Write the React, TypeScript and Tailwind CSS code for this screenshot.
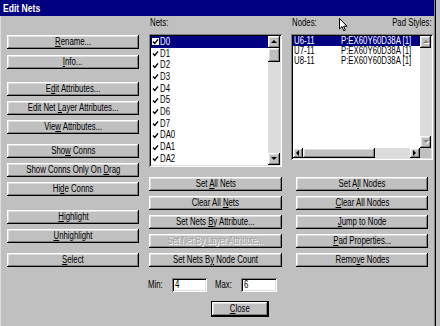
import type { ReactNode } from 'react';

const RAISED = 'shadow-[inset_-1px_-1px_0_#000,inset_1px_1px_0_#fff,inset_-2px_-2px_0_#808080,inset_2px_2px_0_#dfdfdf]';
const SUNKEN = 'shadow-[inset_1px_1px_0_#808080,inset_-1px_-1px_0_#fff,inset_2px_2px_0_#000,inset_-2px_-2px_0_#dfdfdf]';

const NETS = ['D0', 'D1', 'D2', 'D3', 'D4', 'D5', 'D6', 'D7', 'DA0', 'DA1', 'DA2'];
const NODES = ['U6-11', 'U7-11', 'U8-11'];

// the old dialog font is much narrower than Arial, so squeeze the glyphs
const ORIGIN = { l: 'origin-left', c: 'origin-center', r: 'origin-right' };
function T({ children, o = 'c' }: { children: ReactNode; o?: 'l' | 'c' | 'r' }) {
  return <span className={`inline-block whitespace-nowrap scale-x-[0.78] ${ORIGIN[o]}`}>{children}</span>;
}

function Btn({ children, className = '', disabled = false }: { children: ReactNode; className?: string; disabled?: boolean }) {
  return (
    <button
      type="button"
      className={`h-[14px] flex items-center justify-center bg-[#c0c0c0] text-[10px] leading-none ${RAISED} ${
        disabled ? 'text-[#a0a0a0] [text-shadow:1px_1px_0_#fff]' : 'text-black'
      } ${className}`}
    >
      <T>{children}</T>
    </button>
  );
}

function Arrow({ dir, off = false }: { dir: 'up' | 'down' | 'left' | 'right'; off?: boolean }) {
  const pts = { up: '1,5 4,2 7,5', down: '1,2 4,5 7,2', left: '5,1 2,4 5,7', right: '2,1 5,4 2,7' }[dir];
  return (
    <div className={`flex items-center justify-center bg-[#c0c0c0] ${RAISED} ${dir === 'up' || dir === 'down' ? 'h-[12px] w-full' : 'w-[10px] h-full'}`}>
      <svg width="8" height="8" viewBox="0 0 8 8">
        {off && <polygon points={pts} fill="#fff" transform="translate(1,1)" />}
        <polygon points={pts} fill={off ? '#808080' : '#000'} />
      </svg>
    </div>
  );
}

function Check() {
  return (
    <svg width="7" height="7" viewBox="0 0 7 7" className="shrink-0">
      <rect width="7" height="7" fill="#fff" />
      <path d="M1 3.5 L2.8 5.4 L6 1.4" stroke="#000" strokeWidth="1.4" fill="none" />
    </svg>
  );
}

function Cursor() {
  return (
    <svg width="9" height="14" viewBox="0 0 9 14" className="absolute left-[48px] top-[2px]">
      <path d="M0.5 0.5 L0.5 11 L3 8.6 L4.8 12.8 L6.3 12.1 L4.6 8.2 L8 8.2 Z" fill="#fff" stroke="#000" strokeWidth="1" strokeLinejoin="round" />
    </svg>
  );
}

export default function App() {
  return (
    <div className="w-[440px] h-[326px] bg-[#c0c0c0] overflow-hidden font-['Liberation_Sans',Arial,sans-serif] text-black">
      <div className="w-[436px] h-[326px] shadow-[inset_-1px_0_0_#000,inset_-2px_0_0_#808080,inset_1px_0_0_#dfdfdf]">
        <div className="w-[434px] h-[16px] bg-[#000080] text-white font-bold text-[11px] leading-[16px] pl-[3px]">
          <T o="l">Edit Nets</T>
        </div>

        <div className="flex">
          {/* left column */}
          <div className="ml-[7px] w-[132px] pt-[19px] flex flex-col">
            <Btn><u>R</u>ename...</Btn>
            <Btn className="mt-[6px]"><u>I</u>nfo...</Btn>
            <Btn className="mt-[13px]">E<u>d</u>it Attributes...</Btn>
            <Btn className="mt-[5px]">Edit Net <u>L</u>ayer Attributes...</Btn>
            <Btn className="mt-[5px]">Vie<u>w</u> Attributes...</Btn>
            <Btn className="mt-[10px]">Sho<u>w</u> Conns</Btn>
            <Btn className="mt-[5px]">Show Conns Only On <u>D</u>rag</Btn>
            <Btn className="mt-[5px]">Hi<u>d</u>e Conns</Btn>
            <Btn className="mt-[14px]"><u>H</u>ighlight</Btn>
            <Btn className="mt-[5px]"><u>U</u>nhighlight</Btn>
            <Btn className="mt-[10px]"><u>S</u>elect</Btn>
          </div>

          {/* middle column */}
          <div className="ml-[10px] w-[133px] flex flex-col">
            <div className="h-[18px] pt-[1px] pl-[1px] text-[10px] leading-[11px]"><T o="l">Nets:</T></div>
            <div className={`h-[133px] bg-white p-[2px] flex ${SUNKEN}`}>
              <div className="flex-1 min-w-0 text-[10px]">
                {NETS.map((n, i) => (
                  <div key={n} className={`h-[11.7px] flex items-center pl-[1px] ${i === 0 ? 'bg-[#000080] text-white' : ''}`}>
                    <Check />
                    <span className="ml-[1px] leading-none"><T o="l">{n}</T></span>
                  </div>
                ))}
              </div>
              <div className="w-[12px] flex flex-col">
                <Arrow dir="up" />
                <div className={`h-[14px] bg-[#c0c0c0] ${RAISED}`} />
                <div className="flex-1 bg-[#dcdcdc]" />
                <Arrow dir="down" />
              </div>
            </div>
            <div className="mt-[10px] flex flex-col gap-[5px]">
              <Btn>Set <u>A</u>ll Nets</Btn>
              <Btn>Clear All <u>N</u>ets</Btn>
              <Btn>Set Nets <u>B</u>y Attribute...</Btn>
              <Btn disabled>Set Net By Layer Attribute...</Btn>
              <Btn>Set Nets B<u>y</u> Node Count</Btn>
            </div>
            <div className="mt-[10px] flex items-center text-[10px] -ml-[1px]">
              <span className="w-[24px]"><T o="l">Min:</T></span>
              <div className={`w-[35px] h-[14px] bg-white pl-[3px] leading-[14px] ${SUNKEN}`}><T o="l">4</T></div>
              <span className="w-[26px] ml-[8px]"><T o="l">Max:</T></span>
              <div className={`w-[36px] h-[14px] bg-white pl-[3px] leading-[14px] ${SUNKEN}`}><T o="l">6</T></div>
            </div>
            <div className="mt-[9px] ml-[62px] w-[58px] h-[16px] border border-black flex">
              <Btn className="flex-1 h-full"><u>C</u>lose</Btn>
            </div>
          </div>

          {/* right column */}
          <div className="ml-[9px] w-[142px] flex flex-col">
            <div className="relative h-[18px] pt-[1px] px-[1px] flex justify-between text-[10px] leading-[11px]">
              <T o="l">Nodes:</T>
              <T o="r">Pad Styles:</T>
              <Cursor />
            </div>
            <div className={`h-[126px] bg-white p-[2px] flex flex-col ${SUNKEN}`}>
              <div className="flex flex-1 min-h-0">
                <div className="flex-1 min-w-0 text-[10px] overflow-hidden">
                  {NODES.map((n, i) => (
                    <div key={n} className={`h-[10px] flex items-center pl-[1px] leading-none ${i === 0 ? 'bg-[#000080] text-white' : ''}`}>
                      <span className="w-[47px] shrink-0"><T o="l">{n}</T></span>
                      <T o="l">P:EX60Y60D38A [1]</T>
                    </div>
                  ))}
                </div>
                <div className="w-[11px] flex flex-col">
                  <Arrow dir="up" off />
                  <div className="flex-1 bg-[#dcdcdc]" />
                  <Arrow dir="down" off />
                </div>
              </div>
              <div className="h-[10px] flex">
                <div className="flex-1 flex">
                  <Arrow dir="left" />
                  <div className={`w-[72px] bg-[#c0c0c0] ${RAISED}`} />
                  <div className="flex-1 bg-[#dcdcdc]" />
                  <Arrow dir="right" />
                </div>
                <div className="w-[11px] bg-[#c0c0c0]" />
              </div>
            </div>
            <div className="mt-[17px] ml-[5px] w-[132px] flex flex-col gap-[5px]">
              <Btn>Set A<u>l</u>l Nodes</Btn>
              <Btn><u>C</u>lear All Nodes</Btn>
              <Btn><u>J</u>ump to Node</Btn>
              <Btn><u>P</u>ad Properties...</Btn>
              <Btn>Remo<u>v</u>e Nodes</Btn>
            </div>
          </div>
        </div>
      </div>
    </div>
  );
}
